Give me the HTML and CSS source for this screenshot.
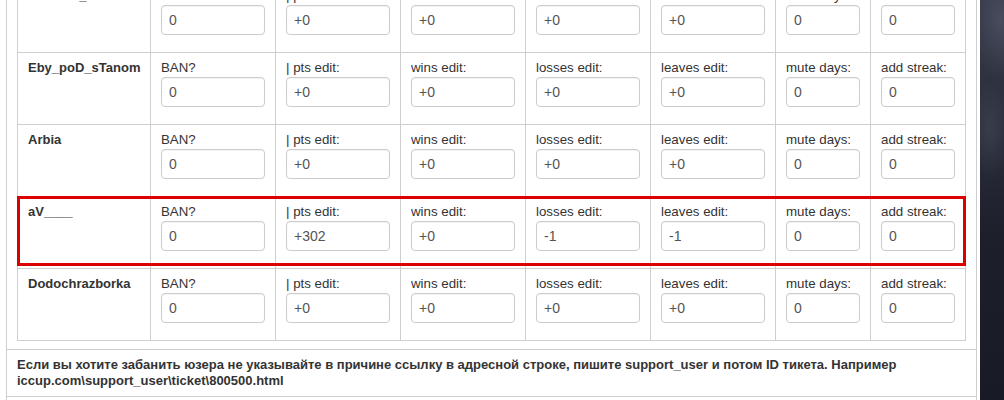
FILE: index.html
```html
<!DOCTYPE html>
<html lang="ru">
<head>
    <meta charset="UTF-8">
    <title>Support - user edit</title>
    <link rel="stylesheet" href="styles.css">
</head>
<body>
<div class="page">
    <div class="content">
        <div class="panel">
            <div class="panel-body">
                <div class="table-wrap">
                    <table class="edit-table">
                        <colgroup>
                            <col class="c-name">
                            <col class="c-wide">
                            <col class="c-wide">
                            <col class="c-wide">
                            <col class="c-wide">
                            <col class="c-wide">
                            <col class="c-small">
                            <col>
                        </colgroup>
                        <tr>
                            <td class="nick">MoDeLL_HAVOK13</td>
                            <td><label>BAN?</label><input type="text" value="0"></td>
                            <td><label>| pts edit:</label><input type="text" value="+0"></td>
                            <td><label>wins edit:</label><input type="text" value="+0"></td>
                            <td><label>losses edit:</label><input type="text" value="+0"></td>
                            <td><label>leaves edit:</label><input type="text" value="+0"></td>
                            <td><label>mute days:</label><input type="text" value="0"></td>
                            <td><label>add streak:</label><input type="text" value="0"></td>
                        </tr>
                        <tr>
                            <td class="nick">Eby_poD_sTanom</td>
                            <td><label>BAN?</label><input type="text" value="0"></td>
                            <td><label>| pts edit:</label><input type="text" value="+0"></td>
                            <td><label>wins edit:</label><input type="text" value="+0"></td>
                            <td><label>losses edit:</label><input type="text" value="+0"></td>
                            <td><label>leaves edit:</label><input type="text" value="+0"></td>
                            <td><label>mute days:</label><input type="text" value="0"></td>
                            <td><label>add streak:</label><input type="text" value="0"></td>
                        </tr>
                        <tr>
                            <td class="nick">Arbia</td>
                            <td><label>BAN?</label><input type="text" value="0"></td>
                            <td><label>| pts edit:</label><input type="text" value="+0"></td>
                            <td><label>wins edit:</label><input type="text" value="+0"></td>
                            <td><label>losses edit:</label><input type="text" value="+0"></td>
                            <td><label>leaves edit:</label><input type="text" value="+0"></td>
                            <td><label>mute days:</label><input type="text" value="0"></td>
                            <td><label>add streak:</label><input type="text" value="0"></td>
                        </tr>
                        <tr>
                            <td class="nick">aV____</td>
                            <td><label>BAN?</label><input type="text" value="0"></td>
                            <td><label>| pts edit:</label><input type="text" value="+302"></td>
                            <td><label>wins edit:</label><input type="text" value="+0"></td>
                            <td><label>losses edit:</label><input type="text" value="-1"></td>
                            <td><label>leaves edit:</label><input type="text" value="-1"></td>
                            <td><label>mute days:</label><input type="text" value="0"></td>
                            <td><label>add streak:</label><input type="text" value="0"></td>
                        </tr>
                        <tr>
                            <td class="nick">Dodochrazborka</td>
                            <td><label>BAN?</label><input type="text" value="0"></td>
                            <td><label>| pts edit:</label><input type="text" value="+0"></td>
                            <td><label>wins edit:</label><input type="text" value="+0"></td>
                            <td><label>losses edit:</label><input type="text" value="+0"></td>
                            <td><label>leaves edit:</label><input type="text" value="+0"></td>
                            <td><label>mute days:</label><input type="text" value="0"></td>
                            <td><label>add streak:</label><input type="text" value="0"></td>
                        </tr>
                    </table>
                    <!-- red highlight around the edited user -->
                    <div class="mark"></div>
                </div>
            </div>
            <div class="panel-note">
                Если вы хотите забанить юзера не указывайте в причине ссылку в адресной строке, пишите support_user и потом ID тикета. Например iccup.com\support_user\ticket\800500.html
            </div>
            <div class="panel-rest"></div>
        </div>
    </div>
    <div class="side"></div>
</div>
</body>
</html>
```

FILE: styles.css
```css
* {
    margin: 0;
    padding: 0;
    box-sizing: border-box;
}

body {
    font-family: "Liberation Sans", Arial, sans-serif;
    font-size: 13px;
    color: #333;
    background: #fff;
    overflow: hidden;
}

.page {
    display: flex;
    height: 420px;
    margin-top: -20px;
}

.content {
    width: 980px;
    padding-left: 6px;
    padding-right: 3px;
}

.side {
    flex: 1;
    background:
        radial-gradient(ellipse 30px 60px at 20px 40px, rgba(90, 94, 112, 0.55), transparent),
        radial-gradient(ellipse 20px 50px at 10px 150px, rgba(80, 84, 100, 0.4), transparent),
        linear-gradient(to bottom, #363948 0%, #2b2e3c 35%, #1d1f2b 60%, #181a25 100%);
}

.panel {
    height: 100%;
    border-left: 1px solid #cfcfcf;
    border-right: 1px solid #cfcfcf;
}

.panel-body {
    padding: 0 10px 8px;
}

.table-wrap {
    position: relative;
}

.edit-table {
    width: 100%;
    table-layout: fixed;
    border-collapse: collapse;
}

.c-name {
    width: 133px;
}

.c-wide {
    width: 125px;
}

.c-small {
    width: 95px;
}

.edit-table td {
    border: 1px solid #cfcfcf;
    padding: 6px 10px 17px;
    vertical-align: top;
}

.edit-table .nick {
    font-size: 13px;
    font-weight: bold;
    line-height: 18px;
    white-space: nowrap;
    overflow: hidden;
}

.edit-table label {
    display: block;
    font-size: 13.3px;
    line-height: 18px;
    font-weight: normal;
    white-space: nowrap;
}

.edit-table input {
    display: block;
    width: 100%;
    height: 30px;
    padding: 0 7px;
    font-family: "Liberation Sans", Arial, sans-serif;
    font-size: 14px;
    color: #555;
    background: #fff;
    border: 1px solid #ccc;
    border-radius: 4px;
    box-shadow: inset 0 1px 1px rgba(0, 0, 0, 0.05);
}

.mark {
    position: absolute;
    left: 0;
    top: 216px;
    width: 100%;
    height: 70px;
    border: 3px solid #dc0000;
    pointer-events: none;
}

.panel-note {
    border-top: 1px solid #cfcfcf;
    border-bottom: 1px solid #cfcfcf;
    padding: 7px 10px 7px;
    font-size: 13px;
    line-height: 16px;
    font-weight: bold;
    color: #333;
}
```
